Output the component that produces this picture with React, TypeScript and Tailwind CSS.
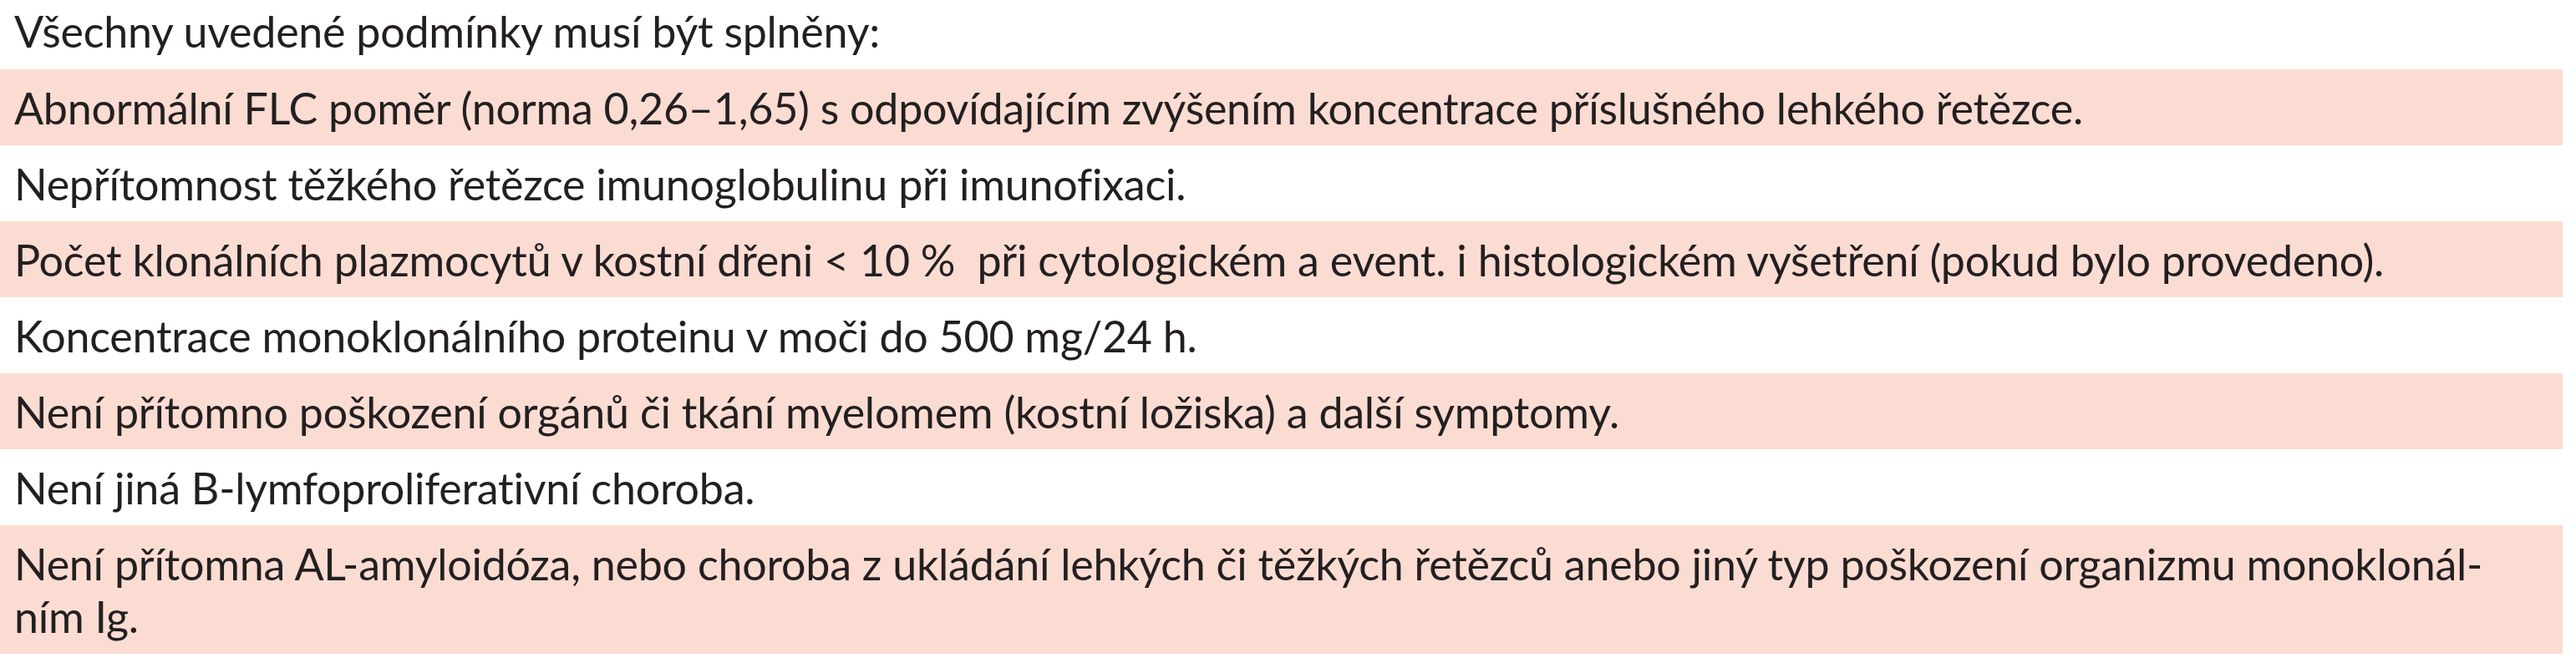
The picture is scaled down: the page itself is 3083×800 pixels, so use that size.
const rows: { text: React.ReactNode; shaded: boolean }[] = [
  {
    text: "Abnormální FLC poměr (norma 0,26–1,65) s odpovídajícím zvýšením koncentrace příslušného lehkého řetězce.",
    shaded: true,
  },
  { text: "Nepřítomnost těžkého řetězce imunoglobulinu při imunofixaci.", shaded: false },
  {
    text: "Počet klonálních plazmocytů v kostní dřeni < 10 %\u00a0 při cytologickém a event. i histologickém vyšetření (pokud bylo provedeno).",
    shaded: true,
  },
  { text: "Koncentrace monoklonálního proteinu v moči do 500 mg/24 h.", shaded: false },
  {
    text: "Není přítomno poškození orgánů či tkání myelomem (kostní ložiska) a další symptomy.",
    shaded: true,
  },
  { text: "Není jiná B-lymfoproliferativní choroba.", shaded: false },
  {
    text: (
      <>
        Není přítomna AL-amyloidóza, nebo choroba z ukládání lehkých či těžkých řetězců anebo jiný typ poškození organizmu monoklonál-
        <br />
        ním Ig.
      </>
    ),
    shaded: true,
  },
];

export default function App() {
  return (
    <div className="h-[800px] w-[3083px] bg-white font-['Lato',sans-serif] text-[52px] leading-[63px] tracking-[-0.25px] text-[#231f20]">
      <div className="w-[3067px]">
        <div className="whitespace-nowrap px-[17px] pt-[6px] pb-[14px]">
          Všechny uvedené podmínky musí být splněny:
        </div>
        {rows.map((r, i) => (
          <div
            key={i}
            className={
              "whitespace-nowrap px-[17px] pt-[15px] pb-[13px] " +
              (r.shaded ? "bg-[#fbdcd3]" : "bg-white")
            }
          >
            {r.text}
          </div>
        ))}
      </div>
    </div>
  );
}
